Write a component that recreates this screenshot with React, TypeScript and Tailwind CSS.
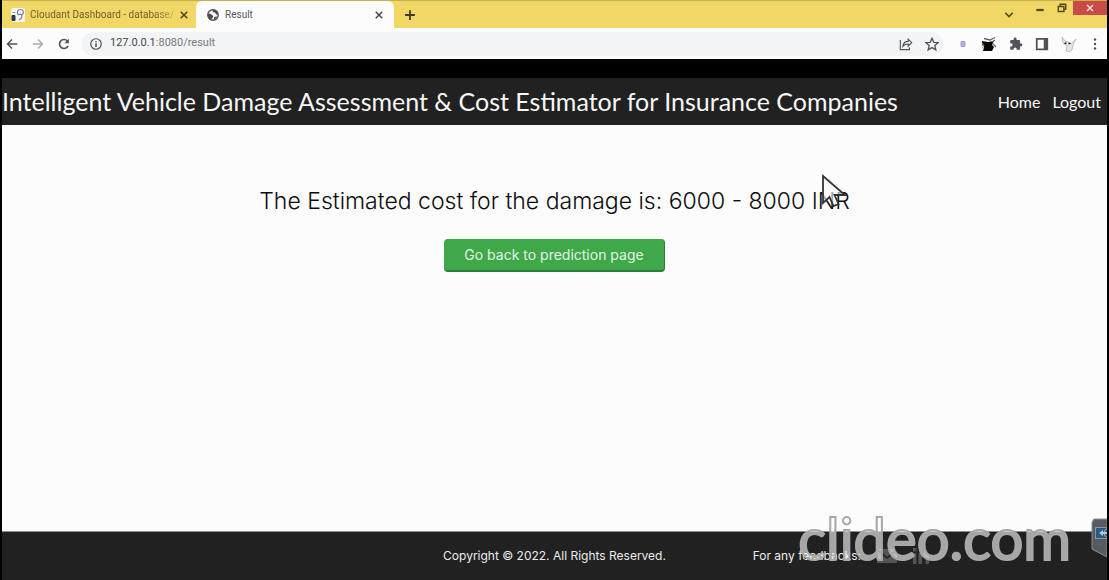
import type { ReactNode } from "react";

function Stroke({ className, width = 2, children }: { className: string; width?: number; children: ReactNode }) {
  return (
    <svg viewBox="0 0 16 16" className={className} fill="none" stroke="currentColor" strokeWidth={width} aria-hidden="true">
      {children}
    </svg>
  );
}

function CloseIcon() {
  return (
    <Stroke className="size-2">
      <path d="M1.5 1.5l13 13M14.5 1.5l-13 13" strokeWidth="3" />
    </Stroke>
  );
}

function TabStrip() {
  return (
    <div className="flex h-7 items-stretch border-t border-[#cbb04f] bg-[#f1d765]">
      <div className="flex w-[194px] items-center pl-2">
        <svg viewBox="0 0 16 16" className="size-4 shrink-0" aria-hidden="true">
          <rect x="1" y="1" width="14" height="14" rx="1.5" fill="#f7f5ee" />
          <rect x="1.5" y="8" width="4" height="6" rx="1" fill="#30364c" />
          <path d="M2.5 5.500h3" stroke="#99a" strokeWidth="1" />
          <path d="M8 7.500c-1.500-3 0-5 2.500-5s3.500 2 2.500 4.500zM12 7l-.5 4-2.500 2" fill="none" stroke="#777db0" strokeWidth="1.200" />
        </svg>
        <span className="ml-1 w-[146px] bg-gradient-to-r from-[#6a5a29] from-85% to-[#d8c05c] bg-clip-text font-[Roboto,sans-serif] text-[10px] whitespace-nowrap text-transparent">
          Cloudant Dashboard - database/
        </span>
        <button type="button" aria-label="Close Cloudant Dashboard tab" className="ml-1 text-[#4c421f]">
          <CloseIcon />
        </button>
      </div>
      <div className="flex w-[198px] items-center rounded-t-md bg-[#fcfcfd] pr-[11px] pl-[11px]">
        <svg viewBox="0 0 16 16" className="size-3 shrink-0" aria-hidden="true">
          <circle cx="8" cy="8" r="7" fill="#f4f4f4" stroke="#4b4d51" strokeWidth="1.800" />
          <path d="M1.500 6c3 0 4 1 6 2.500S7 12 5 14.500C2 13 .5 10 1.500 6zM8 1.500c-1 2 0 3 2 3s1 3 4.500 3C14.500 4 11.500 1.200 8 1.500zM9.500 10.500l4-.5c-.5 2-2 3.500-4 4z" fill="#4b4d51" />
        </svg>
        <span className="ml-1.5 font-[Roboto,sans-serif] text-[10px] text-[#55585c]">Result</span>
        <button type="button" aria-label="Close Result tab" className="ml-auto text-[#45474a]">
          <CloseIcon />
        </button>
      </div>
      <button type="button" aria-label="New tab" className="ml-2.5 text-[#3f3a22]">
        <Stroke className="size-3" width={2.4}>
          <path d="M8 1.500v13M1.500 8h13" />
        </Stroke>
      </button>
      <div className="ml-auto flex items-start text-[#504a1e]">
        <button type="button" aria-label="Search tabs" className="mt-2">
          <Stroke className="size-3" width={2.2}>
            <path d="M3 5l5 5 5-5" />
          </Stroke>
        </button>
        <button type="button" aria-label="Minimize" className="mt-1 ml-5">
          <Stroke className="size-2.5" width={3.5}>
            <path d="M2 8h12" />
          </Stroke>
        </button>
        <button type="button" aria-label="Restore" className="mt-0.5 ml-3">
          <Stroke className="size-2.5" width={2.2}>
            <path d="M2 5.500h9v8H2zM5 5V2h9v8h-3" />
          </Stroke>
        </button>
        <button type="button" aria-label="Close window" className="ml-1.5 flex h-3.5 w-[34px] items-center justify-center bg-[#c84b47] text-[#f6dedd]">
          <Stroke className="size-2">
            <path d="M2 2l12 12M14 2L2 14" strokeWidth="3" />
          </Stroke>
        </button>
      </div>
    </div>
  );
}

function Toolbar() {
  return (
    <div className="flex h-[31px] items-center bg-[#fcfcfd] pr-1.5 pl-1 text-[#505357]">
      <button type="button" aria-label="Back">
        <Stroke className="size-3">
          <path d="M15 8H2M8 2L2 8l6 6" />
        </Stroke>
      </button>
      <button type="button" aria-label="Forward" className="ml-3.5 text-[#aaadb1]">
        <Stroke className="size-3">
          <path d="M1 8h13M8 2l6 6-6 6" />
        </Stroke>
      </button>
      <button type="button" aria-label="Reload" className="ml-3.5">
        <Stroke className="size-3" width={2.2}>
          <path d="M13.500 10.500A6 6 0 1 1 12.500 4" />
          <path d="M14.500 1v6h-6z" fill="currentColor" stroke="none" />
        </Stroke>
      </button>
      <div className="ml-3 flex h-6 flex-1 items-center rounded-full bg-[#f3f4f6] pr-1 pl-2">
        <Stroke className="size-3 shrink-0" width={1.6}>
          <circle cx="8" cy="8" r="7" />
          <path d="M8 7v5M8 4v1.800" strokeWidth="2" />
        </Stroke>
        <a href="#result" className="ml-2 font-[Roboto,sans-serif] text-[11px] text-[#777a7f]">
          <span className="text-[#45474b]">127.0.0.1</span>:8080/result
        </a>
        <button type="button" aria-label="Share" className="ml-auto">
          <Stroke className="size-3.5" width={1.3}>
            <path d="M1.500 3.500v11H12V12M4.500 10.500c.5-4 2.500-5.500 6-5.500V2.500L14.500 6.500l-4 4V8c-3 0-4.500.5-6 2.500z" />
          </Stroke>
        </button>
        <button type="button" aria-label="Bookmark" className="ml-3">
          <Stroke className="size-3.5" width={1.5}>
            <path d="M8 1.500l2 4.600 5 .4-3.800 3.300 1.200 4.900L8 12.100l-4.400 2.600 1.200-4.900L1 6.500l5-.4z" />
          </Stroke>
        </button>
      </div>
      <div className="ml-3.5 flex items-center gap-3">
        <button type="button" aria-label="Extension" className="pl-0.5">
          <svg viewBox="0 0 8 8" className="size-2" aria-hidden="true">
            <rect x="1.500" y="1" width="5" height="6" rx="1" fill="#a4a3d8" />
            <path d="M3 3h2M3 5h2" stroke="#c4c4e6" strokeWidth=".8" />
          </svg>
        </button>
        <button type="button" aria-label="Shopping extension" className="ml-0.5">
          <svg viewBox="0 0 16 16" className="size-4" aria-hidden="true">
            <path d="M1 5l6 1 6-1-2 4 2 2-2 4H2l1-4-2-2z" fill="#080808" />
            <path d="M3 2.500l6 1.500 5-2.500M11 6l3-2M12 8l3 3" fill="none" stroke="#666" strokeWidth="1.300" />
            <path d="M1 7l2 3-2 2" fill="none" stroke="#cf9c66" strokeWidth="1" />
          </svg>
        </button>
        <button type="button" aria-label="Extensions">
          <svg viewBox="0 0 24 24" className="size-3.5" fill="currentColor" aria-hidden="true">
            <path d="M20.500 11H19V7a2 2 0 0 0-2-2h-4V3.500a2.500 2.500 0 0 0-5 0V5H4a2 2 0 0 0-2 2v3.800h1.500a2.700 2.700 0 0 1 0 5.400H2V20a2 2 0 0 0 2 2h3.800v-1.500a2.700 2.700 0 0 1 5.400 0V22H17a2 2 0 0 0 2-2v-4h1.500a2.500 2.500 0 0 0 0-5z" />
          </svg>
        </button>
        <button type="button" aria-label="Side panel">
          <Stroke className="size-3.5">
            <path d="M2 2h12v12H2z" />
            <path d="M10 2h4v12h-4z" fill="currentColor" stroke="none" />
          </Stroke>
        </button>
        <button type="button" aria-label="Profile">
          <svg viewBox="0 0 16 16" className="size-4" aria-hidden="true">
            <path d="M1 1l3 4 4 1 2 2 5-5-3 6-1 5-3 2-3-1 1-5-4-3z" fill="#e4e4e4" stroke="#b4b4b4" strokeWidth=".8" />
            <path d="M3.500 7l2 .5M7.500 7.500h2" stroke="#222" strokeWidth="1.600" />
          </svg>
        </button>
        <button type="button" aria-label="Menu">
          <svg viewBox="0 0 12 12" className="size-3" fill="currentColor" aria-hidden="true">
            <circle cx="6" cy="1.500" r="1.200" />
            <circle cx="6" cy="6" r="1.200" />
            <circle cx="6" cy="10.500" r="1.200" />
          </svg>
        </button>
      </div>
    </div>
  );
}

export default function App() {
  return (
    <div className="relative flex min-h-screen flex-col overflow-hidden bg-black px-0.5 font-[Inter,sans-serif]">
      <TabStrip />
      <Toolbar />
      <header className="mt-[19px] flex h-[47px] items-center justify-between bg-[#212121] pr-1.5 font-[Lato,sans-serif] text-[#f7f7f7]">
        <h1 className="text-[25px] whitespace-nowrap">
          Intelligent Vehicle Damage Assessment &amp; Cost Estimator for Insurance Companies
        </h1>
        <nav className="flex gap-3 text-base">
          <a href="#home">Home</a>
          <a href="#logout">Logout</a>
        </nav>
      </header>
      <main className="flex flex-1 flex-col items-center bg-[#fcfcfc] pt-[60px]">
        <h2 className="text-[23px] leading-8 font-light text-[#0c0c0c]">
          The Estimated cost for the damage is: 6000 - 8000 INR
        </h2>
        <button
          type="button"
          className="mt-[22px] h-[33px] rounded-sm border-r border-b-2 border-[#2f7d3a] bg-[#3fa84a] px-5 text-sm text-[#e2f5e4]"
        >
          Go back to prediction page
        </button>
      </main>
      <footer className="grid h-[49px] grid-cols-3 items-center border-t border-[#8d8d8d] bg-[#212121] text-xs text-[#ececec]">
        <p className="col-start-2 text-center whitespace-nowrap">Copyright © 2022. All Rights Reserved.</p>
        <div className="flex items-center gap-4 pl-3.5">
          <span>For any feedbacks:</span>
          <a href="#email" aria-label="Email" className="text-[#555]">
            <svg viewBox="0 0 20 16" className="h-4 w-5" fill="currentColor" aria-hidden="true">
              <path d="M1 1h18L10 9zM0 3l10 8 10-8v12H0z" />
            </svg>
          </a>
          <a href="#linkedin" aria-label="LinkedIn" className="text-[#555]">
            <svg viewBox="0 0 16 16" className="size-4" fill="currentColor" aria-hidden="true">
              <path d="M0 5h3.500v11H0zM0 0h3.500v3.500H0zM5.500 5H9v1.500C11 3.500 16 4.500 16 9v7h-3.500V10c0-3-3.500-3-3.500 0v6H5.500z" />
            </svg>
          </a>
        </div>
      </footer>
      <svg viewBox="0 0 28 36" className="absolute top-[173px] left-[820px] h-9 w-7" aria-hidden="true">
        <path d="M3 3v27l6.500-6 4 9 5-2-4-9H25z" fill="#fcfcfc" fillOpacity=".6" stroke="#333" strokeWidth="1.800" />
      </svg>
      <div className="absolute right-[38px] bottom-1 font-[Lato,sans-serif] text-[58px] leading-[76px] text-white/60 [-webkit-text-stroke:2px_#a8a8a8]">
        clideo.com
      </div>
      <svg viewBox="0 0 16 40" className="absolute right-0.5 bottom-[22px] h-10 w-4" aria-hidden="true">
        <path d="M1 4l2-3h13v38L1 31z" fill="#555b60" stroke="#8a8e91" />
        <path d="M4 9h12v12H4z" fill="#8b979f" />
        <path d="M5 10h11v10H5z" fill="#285b83" />
        <path d="M16 10.500a5 5 0 0 0 0 9" fill="none" stroke="#a8b8c2" />
        <path d="M8 15l4-3v2h4v2h-4v2z" fill="#b4c4cc" />
      </svg>
    </div>
  );
}
